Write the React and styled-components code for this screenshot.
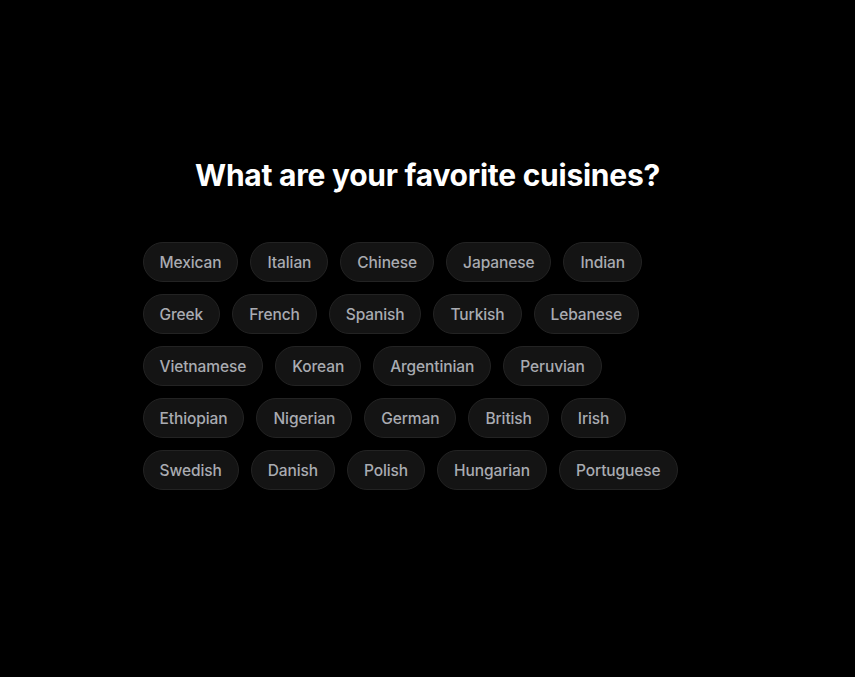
import styled, { createGlobalStyle } from "styled-components";

const GlobalStyle = createGlobalStyle`
  html, body {
    margin: 0;
    padding: 0;
    background: #000;
  }
  body {
    font-family: Inter, "Liberation Sans", Arial, sans-serif;
    -webkit-font-smoothing: antialiased;
  }
`;

const Page = styled.div`
  min-height: 677px;
  display: flex;
  justify-content: center;
  padding-top: 155px;
  box-sizing: border-box;
`;

const Panel = styled.div`
  width: 570px;
  display: flex;
  flex-direction: column;
  align-items: center;
`;

const Title = styled.h1`
  margin: 0 0 47px;
  color: #fff;
  font-size: 30px;
  font-weight: 700;
  letter-spacing: -0.25px;
  line-height: 40px;
`;

const ChipList = styled.div`
  width: 100%;
  display: flex;
  flex-wrap: wrap;
  gap: 12px;
`;

const Chip = styled.button`
  height: 40px;
  padding: 0 16px;
  border-radius: 20px;
  border: 1px solid #232323;
  background: #141414;
  color: #a9abb1;
  font-family: inherit;
  font-size: 15.5px;
  font-weight: 500;
  letter-spacing: -0.1px;
  cursor: pointer;
`;

const cuisines = [
  "Mexican", "Italian", "Chinese", "Japanese", "Indian",
  "Greek", "French", "Spanish", "Turkish", "Lebanese",
  "Vietnamese", "Korean", "Argentinian", "Peruvian",
  "Ethiopian", "Nigerian", "German", "British", "Irish",
  "Swedish", "Danish", "Polish", "Hungarian", "Portuguese",
];

export default function App() {
  return (
    <>
      <GlobalStyle />
      <Page>
        <Panel>
          <Title>What are your favorite cuisines?</Title>
          <ChipList>
            {cuisines.map((c) => (
              <Chip key={c}>{c}</Chip>
            ))}
          </ChipList>
        </Panel>
      </Page>
    </>
  );
}
